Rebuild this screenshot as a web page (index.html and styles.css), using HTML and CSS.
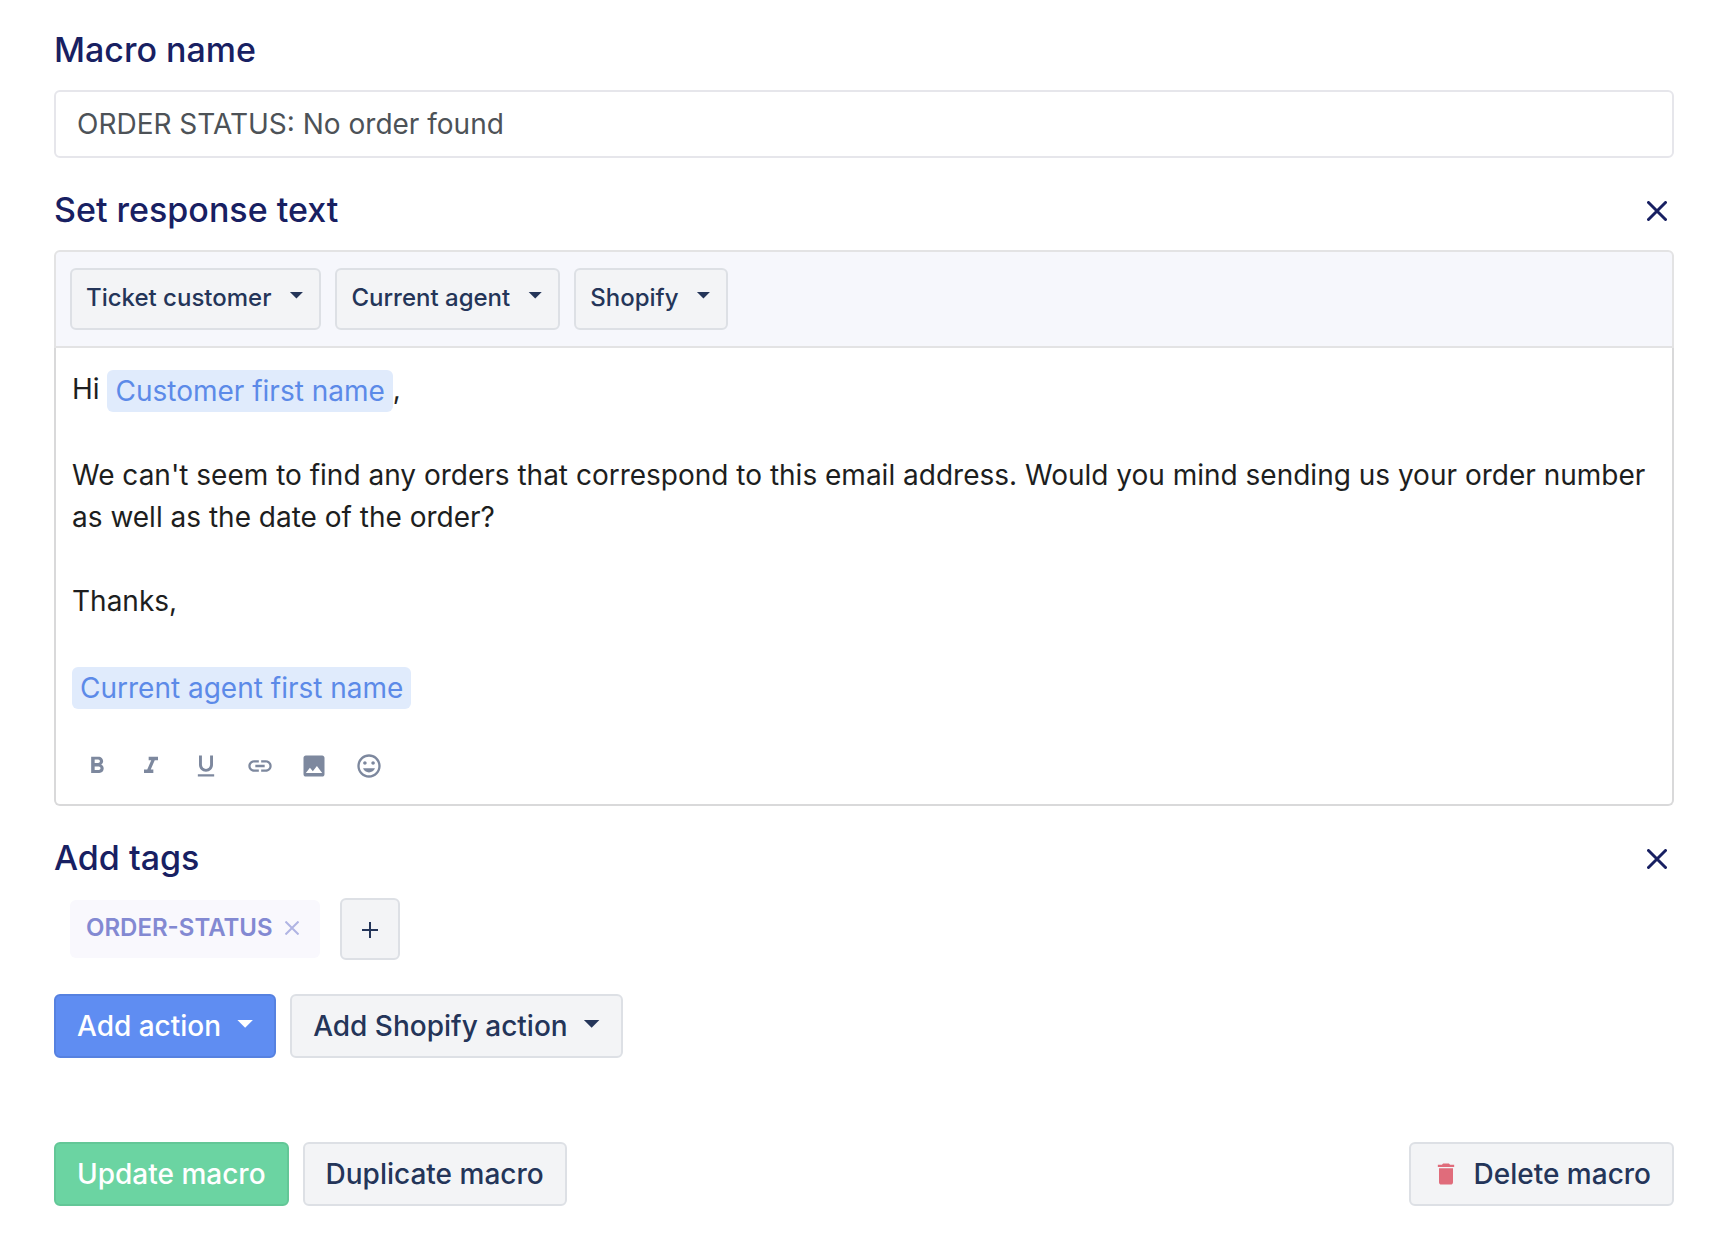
FILE: index.html
```html
<!DOCTYPE html>
<html lang="en">
<head>
  <meta charset="utf-8">
  <meta name="viewport" content="width=device-width, initial-scale=1">
  <title>Edit macro</title>
  <link rel="stylesheet" href="styles.css">
</head>
<body>
  <form class="macro-form">
    <section class="section">
      <label class="heading" for="macro-name">Macro name</label>
      <input class="text-input" id="macro-name" type="text" value="ORDER STATUS: No order found">
    </section>

    <section class="section">
      <div class="section-head">
        <h2 class="heading" id="response-heading">Set response text</h2>
        <button class="close" type="button" aria-label="Remove response text">
          <svg width="20" height="20" viewBox="0 0 20 20" aria-hidden="true"><path d="M1.5 1.5l17 17M18.5 1.5l-17 17"/></svg>
        </button>
      </div>
      <div class="editor">
        <div class="variables">
          <button class="btn btn-small" type="button" aria-haspopup="menu">Ticket customer<span class="caret"></span></button>
          <button class="btn btn-small" type="button" aria-haspopup="menu">Current agent<span class="caret"></span></button>
          <button class="btn btn-small" type="button" aria-haspopup="menu">Shopify<span class="caret"></span></button>
        </div>
        <div class="editor-main">
          <div class="message" contenteditable="true" role="textbox" aria-multiline="true" aria-labelledby="response-heading" spellcheck="false">
            <div>Hi <span class="token">Customer first name</span>,</div>
            <div><br></div>
            <div>We can't seem to find any orders that correspond to this email address. Would you mind sending us your order number as well as the date of the order?</div>
            <div><br></div>
            <div>Thanks,</div>
            <div><br></div>
            <div><span class="token">Current agent first name</span></div>
          </div>
          <div class="format-bar">
            <button class="format" type="button" aria-label="Bold"><svg viewBox="0 0 24 24"><path d="M15.6 10.79c.97-.67 1.65-1.77 1.65-2.79 0-2.26-1.75-4-4-4H7v14h7.04c2.09 0 3.71-1.7 3.71-3.79 0-1.52-.86-2.82-2.15-3.42zM10 6.5h3c.83 0 1.5.67 1.5 1.5s-.67 1.5-1.5 1.5h-3v-3zm3.5 9H10v-3h3.5c.83 0 1.5.67 1.5 1.5s-.67 1.5-1.5 1.5z"/></svg></button>
            <button class="format" type="button" aria-label="Italic"><svg viewBox="0 0 24 24"><path d="M10 4v3h2.21l-3.42 8H6v3h8v-3h-2.21l3.42-8H18V4z"/></svg></button>
            <button class="format" type="button" aria-label="Underline"><svg viewBox="0 0 24 24"><path d="M12 17c3.31 0 6-2.69 6-6V3h-2.5v8c0 1.93-1.57 3.5-3.5 3.5S8.5 12.930 8.500 11V3H6v8c0 3.310 2.690 6 6 6zm-7 2v2h14v-2H5z"/></svg></button>
            <button class="format" type="button" aria-label="Insert link"><svg viewBox="0 0 24 24"><path d="M3.900 12c0-1.710 1.390-3.100 3.100-3.100h4V7H7c-2.760 0-5 2.240-5 5s2.240 5 5 5h4v-1.900H7c-1.710 0-3.100-1.390-3.100-3.100zM8 13h8v-2H8v2zm9-6h-4v1.900h4c1.710 0 3.100 1.390 3.100 3.100s-1.390 3.100-3.100 3.100h-4V17h4c2.760 0 5-2.240 5-5s-2.240-5-5-5z"/></svg></button>
            <button class="format" type="button" aria-label="Insert image"><svg viewBox="0 0 24 24"><path d="M21 19V5c0-1.100-.900-2-2-2H5c-1.100 0-2 .900-2 2v14c0 1.100.900 2 2 2h14c1.100 0 2-.900 2-2zM5 18l3.500-4.500 2.500 3.010L14.500 12l4.500 6H5z"/></svg></button>
            <button class="format" type="button" aria-label="Insert emoji"><svg viewBox="0 0 24 24"><path d="M11.990 2C6.470 2 2 6.480 2 12s4.470 10 9.990 10C17.520 22 22 17.520 22 12S17.520 2 11.990 2zM12 20c-4.420 0-8-3.580-8-8s3.580-8 8-8 8 3.580 8 8-3.580 8-8 8zM15.500 11c.830 0 1.500-.670 1.500-1.500S16.330 8 15.500 8 14 8.670 14 9.500s.670 1.500 1.500 1.500zM8.500 11c.830 0 1.500-.670 1.500-1.500S9.330 8 8.500 8 7 8.670 7 9.500 7.670 11 8.500 11zM12 17.500c2.330 0 4.310-1.460 5.110-3.500H6.890c.800 2.040 2.780 3.500 5.110 3.500z"/></svg></button>
          </div>
        </div>
      </div>
    </section>

    <section class="section">
      <div class="section-head">
        <h2 class="heading">Add tags</h2>
        <button class="close" type="button" aria-label="Remove tags">
          <svg width="20" height="20" viewBox="0 0 20 20" aria-hidden="true"><path d="M1.5 1.5l17 17M18.5 1.5l-17 17"/></svg>
        </button>
      </div>
      <div class="tags">
        <span class="tag">ORDER-STATUS
          <button class="tag-remove" type="button" aria-label="Remove ORDER-STATUS"><svg width="14" height="14" viewBox="0 0 14 14"><path d="M.5.5l13 13M13.500.5l-13 13"/></svg></button>
        </span>
        <button class="btn btn-plus" type="button" aria-label="Add tag"><svg width="18" height="18" viewBox="0 0 18 18"><path d="M9 1v16M1 9h16"/></svg></button>
      </div>
    </section>

    <div class="row">
      <button class="btn btn-primary" type="button" aria-haspopup="menu">Add action<span class="caret"></span></button>
      <button class="btn" type="button" aria-haspopup="menu">Add Shopify action<span class="caret"></span></button>
    </div>

    <div class="row footer">
      <button class="btn btn-success" type="submit">Update macro</button>
      <button class="btn" type="button">Duplicate macro</button>
      <button class="btn btn-delete" type="button"><svg class="trash" width="28" height="28" viewBox="0 0 24 24"><path d="M6 19c0 1.100.900 2 2 2h8c1.100 0 2-.900 2-2V7H6v12zM19 4h-3.500l-1-1h-5l-1 1H5v2h14V4z"/></svg>Delete macro</button>
    </div>
  </form>
</body>
</html>
```
FILE: styles.css
```css
* {
  box-sizing: border-box;
}

body {
  margin: 0;
  background: #fff;
  color: #1d1e20;
  font-family: Inter, "Liberation Sans", sans-serif;
  font-size: 28px;
  line-height: 42px;
}

button,
input {
  font: inherit;
}

button {
  cursor: pointer;
}

.macro-form {
  padding: 30px 54px 46px;
}

.section {
  margin-bottom: 32px;
}

.heading {
  display: block;
  margin: 0;
  color: #182062;
  font-size: 34px;
  font-weight: 500;
  line-height: 40px;
}

.text-input {
  display: block;
  width: 100%;
  height: 68px;
  margin-top: 20px;
  padding: 0 21px;
  border: 2px solid #e6e6eb;
  border-radius: 6px;
  background: #fff;
  color: #4d5257;
}

.section-head {
  display: flex;
  align-items: center;
  justify-content: space-between;
  margin-bottom: 20px;
}

.close {
  display: flex;
  padding: 7px 7px 5px;
  border: 0;
  background: none;
}

.close svg {
  fill: none;
  stroke: #182062;
  stroke-width: 3;
  stroke-linecap: round;
}

.variables {
  display: flex;
  gap: 14px;
  padding: 16px 14px;
  border: 2px solid #e3e3e4;
  border-radius: 6px 6px 0 0;
  background: #f6f7fc;
}

.editor-main {
  padding: 20px 16px 18px;
  border: 2px solid #d9d9da;
  border-top: 0;
  border-radius: 0 0 6px 6px;
}

.message {
  outline: 0;
}

.token {
  display: inline-block;
  padding: 0 8px;
  border-radius: 6px;
  background: #e0ebfc;
  color: #5c8ae8;
  vertical-align: middle;
}

.format-bar {
  display: grid;
  grid-template-columns: repeat(6, 1fr);
  width: 326px;
  margin: 37px 0 0 -2px;
}

.format {
  display: flex;
  justify-content: center;
  padding: 6px 0;
  border: 0;
  background: none;
}

.format svg {
  width: 28px;
  height: 28px;
  fill: #7d889e;
}

.btn {
  display: flex;
  align-items: center;
  height: 64px;
  padding: 0 21px;
  border: 2px solid #dde0e5;
  border-radius: 6px;
  background: #f3f4f6;
  color: #243559;
  font-weight: 500;
  white-space: nowrap;
}

.btn-small {
  height: 62px;
  padding: 0 16px 2px 14px;
  font-size: 24px;
}

.caret {
  width: 16px;
  height: 8px;
  margin: -4px 0 0 16px;
  background: currentColor;
  clip-path: polygon(0 0, 100% 0, 50% 100%);
}

.btn-small .caret {
  width: 14px;
  height: 7px;
  margin: -6px 0 0 18px;
}

.btn-primary {
  border-color: #5681e0;
  background: #5f8df2;
  color: #fff;
}

.btn-success {
  border-color: #63c797;
  background: #6bd4a2;
  color: #fff;
}

.btn-delete {
  margin-left: auto;
}

.trash {
  margin-right: 14px;
  fill: #e06c7b;
}

.tags {
  display: flex;
  align-items: center;
  gap: 20px;
  padding: 0 0 2px 16px;
}

.tag {
  display: flex;
  align-items: center;
  gap: 12px;
  height: 58px;
  padding: 0 21px 2px 16px;
  border-radius: 6px;
  background: #f9f8fd;
  color: #8389d2;
  font-size: 24px;
  font-weight: 600;
}

.tag-remove {
  display: flex;
  padding: 0;
  border: 0;
  background: none;
}

.tag-remove svg {
  fill: none;
  stroke: #b0b4e3;
  stroke-width: 2;
}

.btn-plus {
  justify-content: center;
  width: 60px;
  height: 62px;
  padding: 2px 0 0;
}

.btn-plus svg {
  fill: none;
  stroke: #243559;
  stroke-width: 2;
}

.row {
  display: flex;
  flex-wrap: wrap;
  gap: 14px;
}

.footer {
  margin-top: 84px;
}
```
